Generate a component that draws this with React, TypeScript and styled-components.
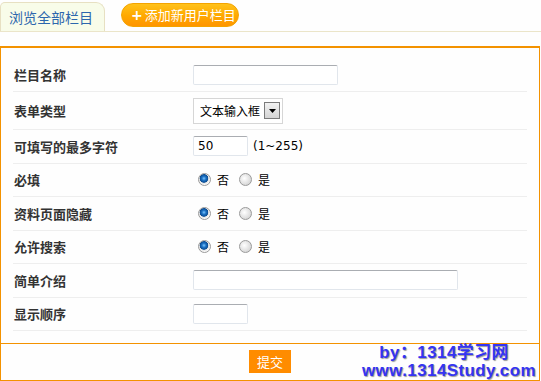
import styled, { createGlobalStyle } from "styled-components";

const GlobalStyle = createGlobalStyle`
  body {
    margin: 0;
    background: #fefefe;
    font-family: "Noto Sans CJK SC", "DejaVu Sans", sans-serif;
    font-size: 12px;
    color: #000;
  }
`;

const fields = [
  { label: "栏目名称", kind: "text", width: 145 },
  { label: "表单类型", kind: "select" },
  { label: "可填写的最多字符", kind: "max" },
  { label: "必填", kind: "radio" },
  { label: "资料页面隐藏", kind: "radio" },
  { label: "允许搜索", kind: "radio" },
  { label: "简单介绍", kind: "text", width: 265 },
  { label: "显示顺序", kind: "text", width: 55 },
];

const App = () => {
  return (
    <Page>
      <GlobalStyle />
      <TabBar>
        <Tab>浏览全部栏目</Tab>
        <AddButton>
          <span className="plus">+</span>添加新用户栏目
        </AddButton>
      </TabBar>
      <FormBox>
        <Rows>
          {fields.map((f, i) => (
            <Row key={f.label} $tall={f.kind === "select"} $first={i === 0}>
              <Label>{f.label}</Label>
              <Field>
                {f.kind === "text" && <TextInput $w={f.width || 145} />}
                {f.kind === "select" && (
                  <SelectBox>
                    <span>文本输入框</span>
                    <SelectArrow>
                      <svg width="7" height="4" viewBox="0 0 7 4">
                        <path d="M0 0h7L3.5 4z" fill="#000" />
                      </svg>
                    </SelectArrow>
                  </SelectBox>
                )}
                {f.kind === "max" && (
                  <>
                    <TextInput $w={55} defaultValue="50" />
                    <Hint>(1~255)</Hint>
                  </>
                )}
                {f.kind === "radio" && (
                  <RadioGroup>
                    <Radio type="radio" name={f.label} defaultChecked />
                    <RadioText>否</RadioText>
                    <Radio type="radio" name={f.label} />
                    <RadioText>是</RadioText>
                  </RadioGroup>
                )}
              </Field>
            </Row>
          ))}
        </Rows>
        <Footer>
          <Submit>提交</Submit>
        </Footer>
        <Watermark>
          <div className="l1">by：1314学习网</div>
          <div className="l2">www.1314Study.com</div>
        </Watermark>
      </FormBox>
    </Page>
  );
};

const Page = styled.div`
  width: 541px;
`;

const TabBar = styled.div`
  display: flex;
  align-items: flex-start;
  height: 31px;
  border-bottom: 1px solid #ebe5c9;
`;

const Tab = styled.div`
  margin-top: 2px;
  height: 29px;
  box-sizing: border-box;
  padding: 4px 0 0 8px;
  width: 105px;
  background: #f8fce9;
  border: 1px solid #e7e0c2;
  border-bottom: none;
  border-radius: 5px 9px 0 0;
  color: #2d67ad;
  font-size: 14px;
  line-height: 20px;
`;

const AddButton = styled.div`
  margin: 3px 0 0 16px;
  width: 118px;
  height: 24px;
  box-sizing: border-box;
  border-radius: 12px;
  border: 1px solid #f4a400;
  background: linear-gradient(#ffc21a, #ffa800 55%, #ff9500);
  color: #fff;
  font-size: 13px;
  line-height: 22px;
  display: flex;
  align-items: center;
  padding-left: 9px;
  gap: 2px;

  .plus {
    font-family: "DejaVu Sans", sans-serif;
    font-weight: bold;
    font-size: 14px;
  }
`;

const FormBox = styled.div`
  position: relative;
  margin-top: 14px;
  width: 540px;
  box-sizing: border-box;
  border: 1px solid #f39200;
  border-top-width: 2px;
`;

const Rows = styled.div`
  padding: 10px 12px 12px 12px;
  border-bottom: 1px solid #f39200;
`;

const Row = styled.div<{ $tall?: boolean; $first?: boolean }>`
  display: grid;
  grid-template-columns: 180px 1fr;
  align-items: center;
  box-sizing: border-box;
  height: ${(p) => (p.$tall ? "38px" : p.$first ? "34px" : "33.5px")};
  border-bottom: 1px solid #eeeeee;
`;

const Label = styled.div`
  font-weight: bold;
  font-size: 13px;
  color: #333;
  padding-left: 1px;
`;

const Field = styled.div`
  display: flex;
  align-items: center;
`;

const TextInput = styled.input<{ $w: number }>`
  width: ${(p) => p.$w}px;
  height: 20px;
  box-sizing: border-box;
  border: 1px solid #e1e6ec;
  border-top-color: #aaadb2;
  border-radius: 2px;
  padding: 0 4px;
  font-family: "DejaVu Sans", sans-serif;
  font-size: 12px;
  color: #000;
  outline: none;
  background: #fff;
`;

const Hint = styled.span`
  margin-left: 5px;
  font-family: "DejaVu Sans", sans-serif;
  font-size: 12px;
  color: #000;
`;

const SelectBox = styled.div`
  width: 90px;
  height: 26px;
  box-sizing: border-box;
  border: 1px solid #d6d6d6;
  background: #fff;
  display: flex;
  align-items: center;
  justify-content: space-between;
  padding: 0 2px 0 6px;
  font-size: 12px;
`;

const SelectArrow = styled.span`
  width: 16px;
  height: 17px;
  box-sizing: border-box;
  border: 1px solid #7b7b7b;
  background: linear-gradient(#f2f2f2, #d4d4d4);
  display: flex;
  align-items: center;
  justify-content: center;
`;

const RadioGroup = styled.div`
  display: flex;
  align-items: center;
  padding-left: 5px;
`;

const Radio = styled.input`
  appearance: none;
  margin: 0;
  width: 13px;
  height: 13px;
  border-radius: 50%;
  box-sizing: border-box;
  border: 1px solid #9a9a9a;
  background: radial-gradient(circle at 40% 40%, #ffffff, #d4d4d4 80%);

  &:checked {
    background: radial-gradient(circle at 45% 40%, #7ec6ff 0, #1e74c6 2px, #0b4d94 4px, #e4e4e4 4.6px, #fafafa 70%);
  }
`;

const RadioText = styled.span`
  margin: 0 10px 0 6px;
  font-size: 12px;
`;

const Footer = styled.div`
  height: 36px;
  display: flex;
  justify-content: center;
  padding-top: 6px;
  box-sizing: border-box;
`;

const Submit = styled.button`
  width: 42px;
  height: 23px;
  border: none;
  background: #ff8c00;
  color: #fff;
  font-family: "Noto Sans CJK SC", sans-serif;
  font-size: 13px;
  padding: 0;
`;

const Watermark = styled.div`
  position: absolute;
  right: 3px;
  bottom: 0px;
  font-family: "Liberation Sans", Arial, "Noto Sans CJK SC", sans-serif;
  font-weight: bold;
  font-size: 17px;
  line-height: 18px;
  letter-spacing: 0.4px;
  color: #3434f2;
  text-shadow: 1px 1px 1px #9a9a9a;
  text-align: right;

  .l1 {
    padding-right: 27px;
  }
`;

export default App;
